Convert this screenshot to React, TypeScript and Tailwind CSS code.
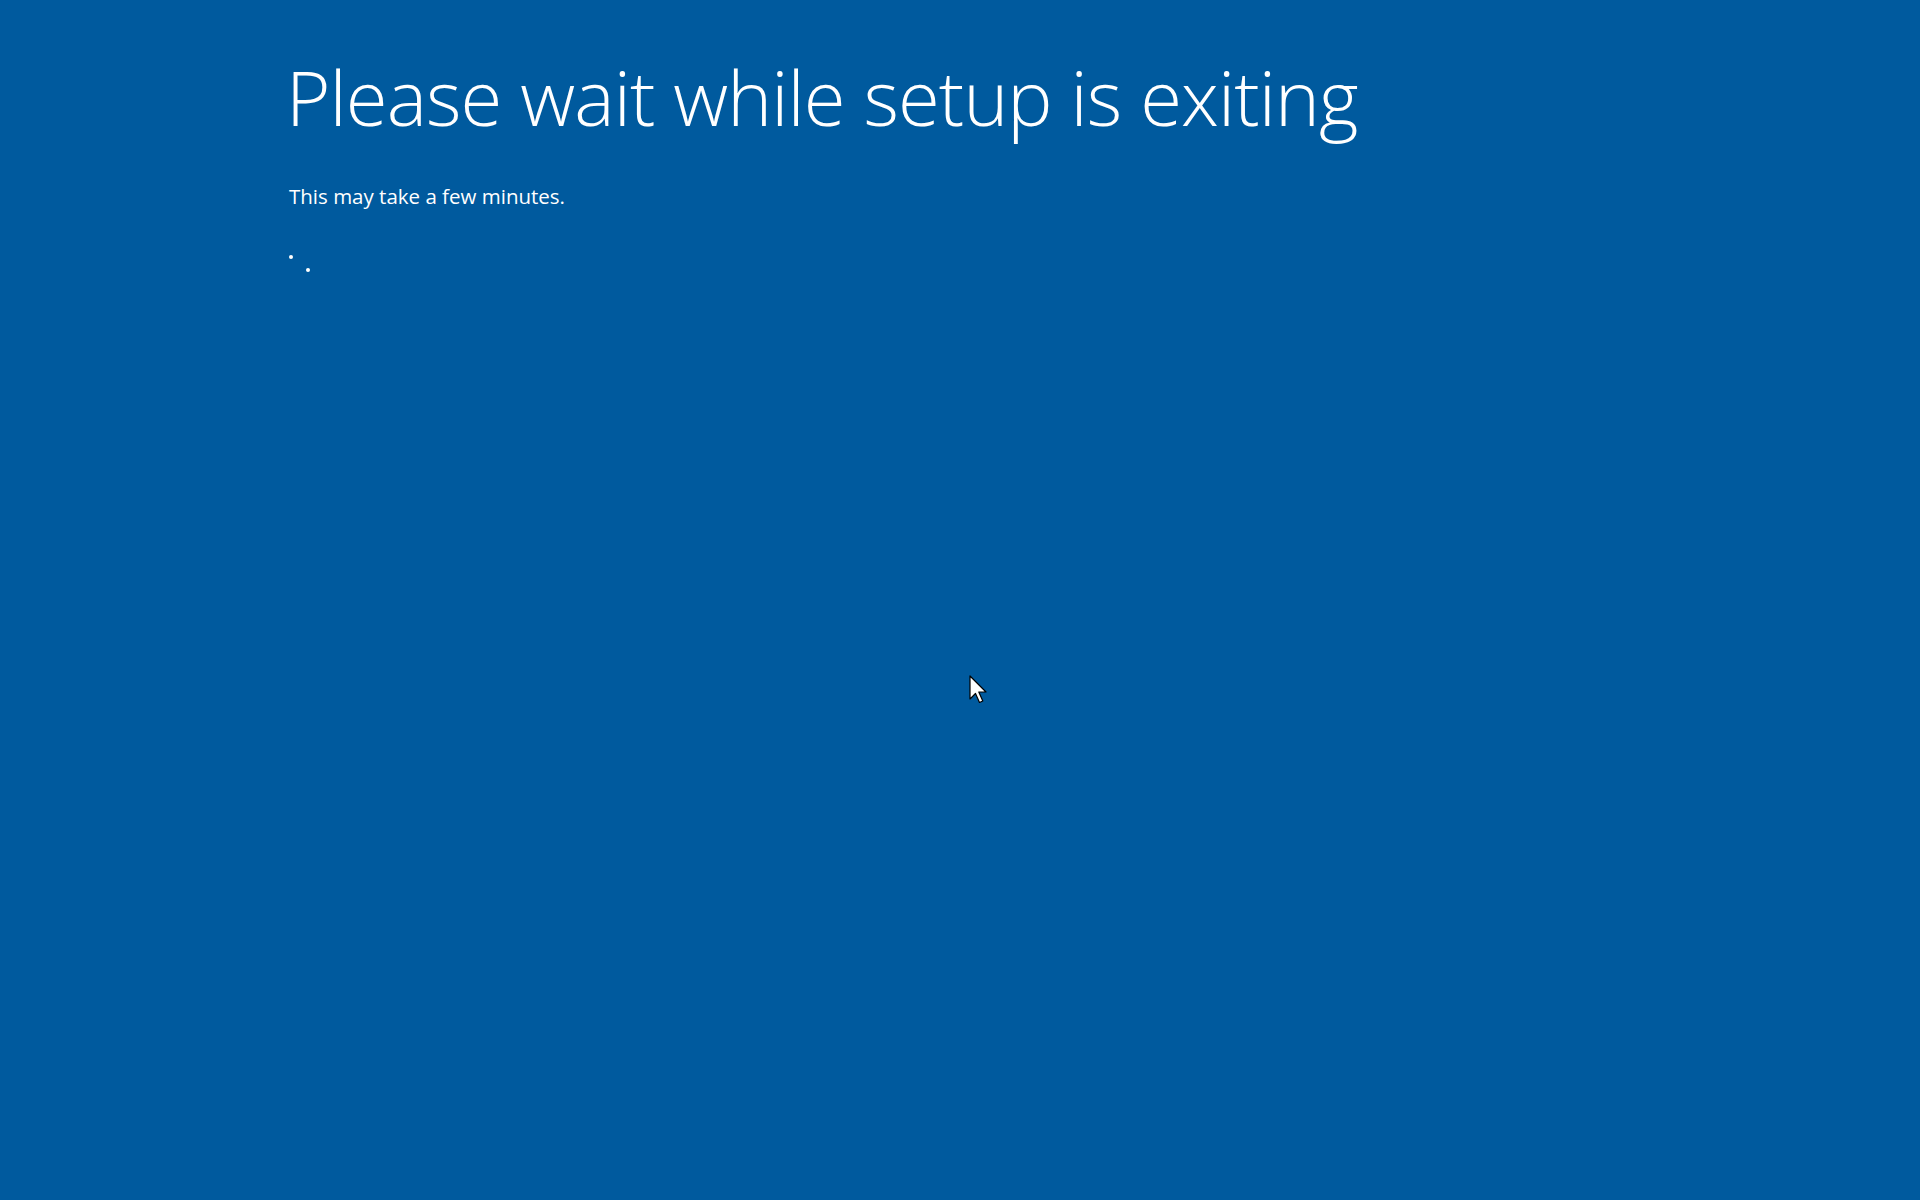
export default function App() {
  return (
    <div className="relative h-[1200px] w-[1920px] overflow-hidden bg-[#005a9e] text-white" style={{ fontFamily: '"Open Sans", "Noto Sans", sans-serif' }}>
      <div className="pl-[286px] pt-[47px]">
        <h1 className="text-[76px] font-light leading-[100px] tracking-[-0.9px]">Please wait while setup is exiting</h1>
        <p className="ml-[3px] mt-[35px] text-[20.5px] font-normal leading-[28px]">This may take a few minutes.</p>
        <div className="relative mt-[44px] h-[30px]">
          <span className="absolute left-[3px] top-[1px] h-[4px] w-[4px] rounded-full bg-white" />
          <span className="absolute left-[20px] top-[14px] h-[4px] w-[4px] rounded-full bg-white" />
        </div>
      </div>

      {/* mouse pointer */}
      <svg className="absolute left-[969px] top-[675px]" width="20" height="30" viewBox="0 0 20 30">
        <path d="M1 1 L1 24 L6.5 18.5 L10.5 27.5 L13.8 26 L9.8 17 L17 17 Z" fill="white" stroke="black" strokeWidth="1.2" strokeLinejoin="round" />
      </svg>
    </div>
  );
}
